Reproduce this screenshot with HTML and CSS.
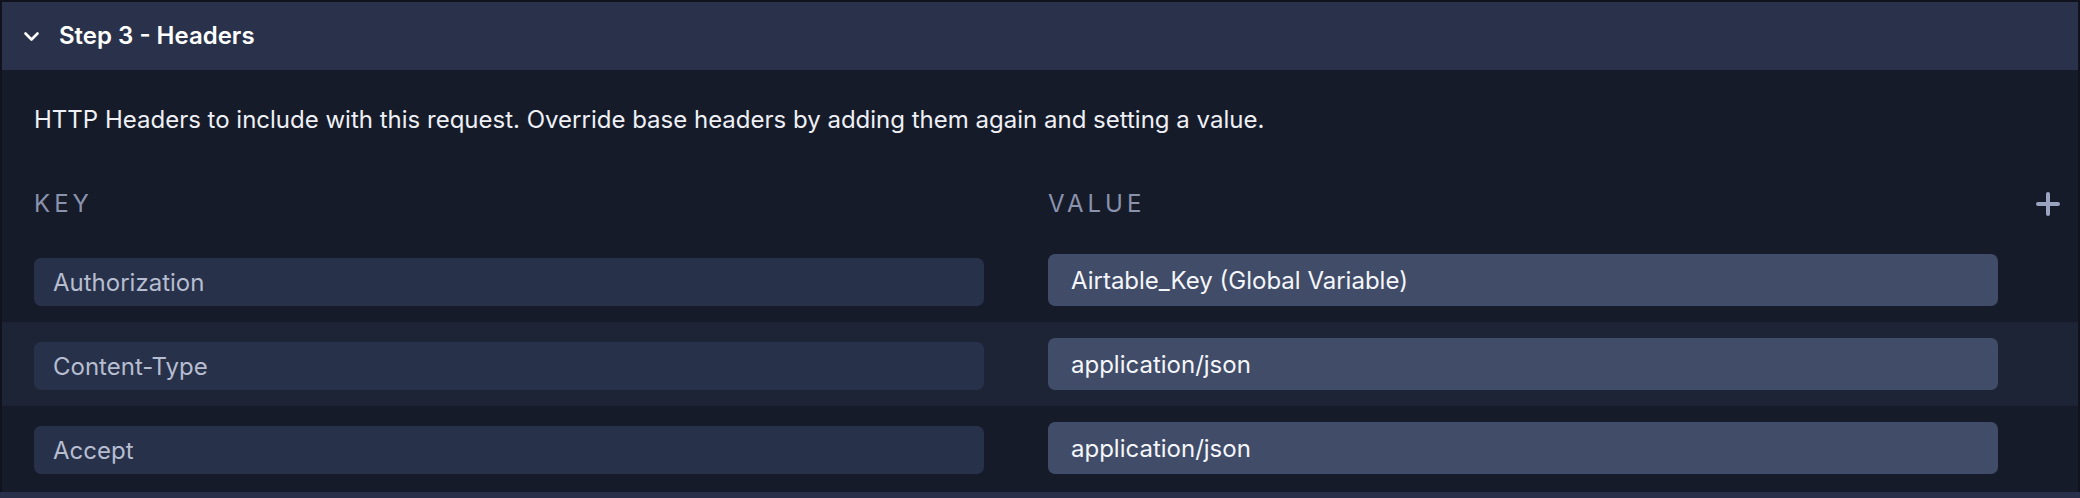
FILE: index.html
```html
<!DOCTYPE html>
<html lang="en">
<head>
<meta charset="utf-8">
<title>Step 3 - Headers</title>
<link rel="stylesheet" href="styles.css">
</head>
<body>
<section class="panel">
  <header class="panel-header">
    <svg class="chevron" width="17" height="11" viewBox="0 0 17 11" aria-hidden="true">
      <path d="M2.5 2.5 L8.5 8.5 L14.5 2.5" fill="none" stroke="#ffffff" stroke-width="2.6" stroke-linecap="round" stroke-linejoin="round"/>
    </svg>
    <h2 class="panel-title">Step 3 - Headers</h2>
  </header>
  <div class="panel-body">
    <p class="description">HTTP Headers to include with this request. Override base headers by adding them again and setting a value.</p>
    <div class="labels">
      <div class="label key-col">KEY</div>
      <div class="label value-col">VALUE</div>
      <div class="action-col">
        <svg class="plus" width="24" height="24" viewBox="0 0 24 24" aria-hidden="true">
          <path d="M12 2 V22 M2 12 H22" fill="none" stroke="#9aa3bf" stroke-width="4" stroke-linecap="round"/>
        </svg>
      </div>
    </div>
    <div class="rows">
      <div class="row">
        <div class="key-col"><div class="field key-field">Authorization</div></div>
        <div class="value-col"><div class="field value-field">Airtable_Key (Global Variable)</div></div>
        <div class="action-col"></div>
      </div>
      <div class="row row-alt">
        <div class="key-col"><div class="field key-field">Content-Type</div></div>
        <div class="value-col"><div class="field value-field">application/json</div></div>
        <div class="action-col"></div>
      </div>
      <div class="row">
        <div class="key-col"><div class="field key-field">Accept</div></div>
        <div class="value-col"><div class="field value-field">application/json</div></div>
        <div class="action-col"></div>
      </div>
    </div>
  </div>
</section>
<div class="next-section"></div>
</body>
</html>
```
FILE: styles.css
```css
* { box-sizing: border-box; }
html, body {
  margin: 0;
  padding: 0;
  background: #161b2a;
  font-family: Inter, "Noto Sans", "Liberation Sans", sans-serif;
  color: #eef0f5;
  overflow: hidden;
}
.panel {
  border: 2px solid #10131d;
  border-bottom: none;
  background: #161b2a;
  width: 2080px;
}
.panel-header {
  height: 68px;
  background: #29324a;
  display: flex;
  align-items: center;
  padding-left: 21px;
}
.chevron {
  display: block;
  margin-right: 19px;
  margin-top: 1px;
}
.panel-title {
  margin: 0;
  font-size: 24px;
  font-weight: 600;
  color: #ffffff;
  line-height: 32px;
}
.panel-body {
  padding-top: 34px;
  padding-bottom: 2px;
}
.description {
  margin: 0 0 0 32px;
  font-size: 24px;
  line-height: 32px;
  color: #eef0f5;
}
.labels {
  display: flex;
  align-items: center;
  padding-left: 32px;
  margin-top: 52px;
  margin-bottom: 18px;
  height: 32px;
}
.label {
  font-size: 24px;
  line-height: 32px;
  letter-spacing: 4px;
  color: #8a92ad;
  font-weight: 400;
}
.key-col { flex: 1 1 0; min-width: 0; }
.value-col { flex: 1 1 0; min-width: 0; margin-left: 64px; }
.action-col {
  width: 80px;
  flex: none;
  display: flex;
  justify-content: flex-end;
  padding-right: 18px;
}
.plus { display: block; }
.row {
  display: flex;
  align-items: flex-end;
  height: 84px;
  padding: 16px 0 16px 32px;
}
.row-alt { background: #1d2436; }
.field {
  border-radius: 7px;
  display: flex;
  align-items: center;
  font-size: 24px;
  white-space: nowrap;
  overflow: hidden;
}
.key-field {
  height: 48px;
  background: #28314a;
  color: #b6bdd0;
  padding-left: 19px;
}
.value-field {
  height: 52px;
  background: #414c69;
  color: #f4f6fa;
  padding-left: 23px;
}
.next-section {
  height: 20px;
  background: #283149;
}
```
